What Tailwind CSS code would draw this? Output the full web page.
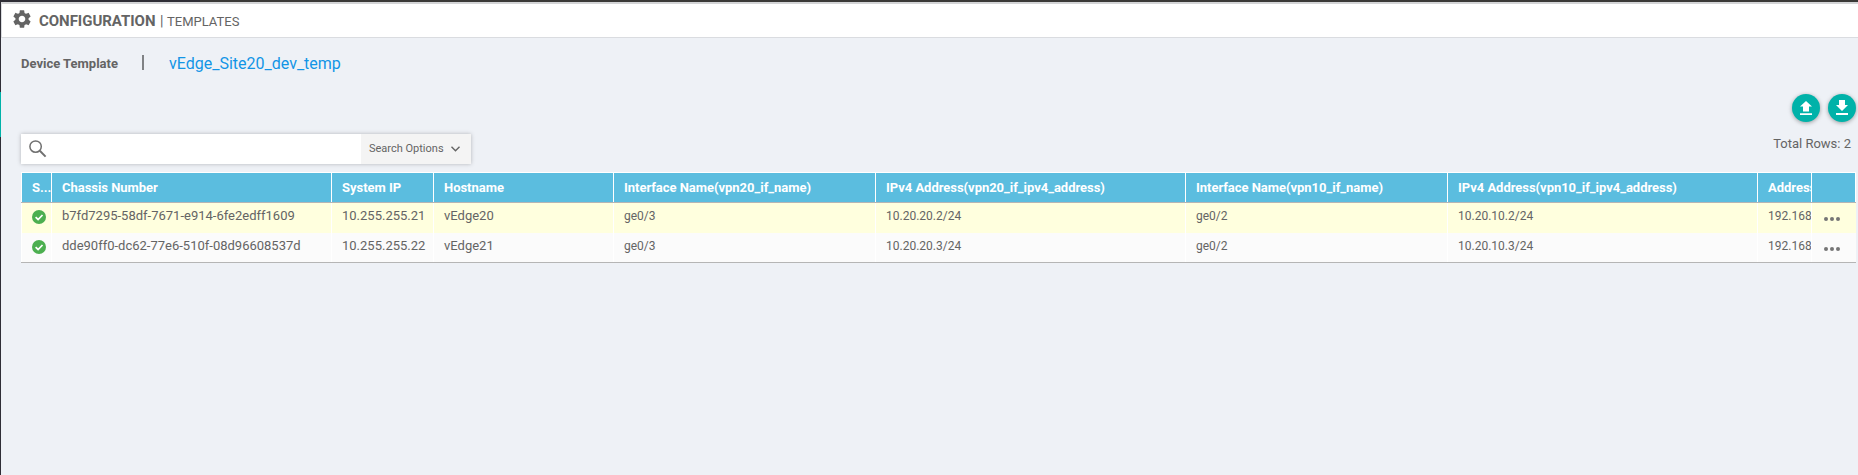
<!DOCTYPE html>
<html lang="en">
<head>
<meta charset="utf-8">
<title>Configuration | Templates</title>
<script src="https://cdn.jsdelivr.net/npm/@tailwindcss/browser@4"></script>
</head>
<body class="flex h-[475px] w-[1858px] flex-col overflow-hidden bg-[#eef1f6] font-['Roboto',sans-serif] text-[#646464]">
<svg class="hidden">
  <symbol id="ok" viewBox="0 0 14 14"><circle cx="7" cy="7" r="7" fill="#4caf50"/><path d="M3.6 7.2 6.1 9.5 10.5 5" fill="none" stroke="#fff" stroke-width="1.7"/></symbol>
  <symbol id="dots" viewBox="0 0 16 4"><g fill="#757575"><circle cx="2" cy="2" r="2"/><circle cx="8" cy="2" r="2"/><circle cx="14" cy="2" r="2"/></g></symbol>
</svg>
<div class="flex h-[2px] shrink-0"><div class="w-[200px] bg-[#2f2e36]"></div><div class="flex-1 bg-[#3a3937]"></div></div>
<div class="flex min-h-0 flex-1">
  <div class="flex w-px shrink-0 flex-col bg-[#2f2e36] pt-[90px]"><div class="h-[45px] bg-[#00b2a9]"></div></div>
  <main class="min-w-0 flex-1">
    <header class="flex h-[36px] items-center border-t-2 border-b border-l border-t-[#d3d4d6] border-b-[#dadce0] border-l-[#dadce0] bg-white pl-[9px]">
      <svg class="mt-[-3px] size-[22px]" viewBox="0 0 24 24" fill="#646464"><path d="M19.14 12.94c.04-.3.06-.61.06-.94 0-.32-.02-.64-.07-.94l2.03-1.58a.49.49 0 0 0 .12-.61l-1.92-3.32a.488.488 0 0 0-.59-.22l-2.39.96c-.5-.38-1.03-.7-1.62-.94l-.36-2.54a.484.484 0 0 0-.48-.41h-3.84c-.24 0-.43.17-.47.41l-.36 2.54c-.59.24-1.13.57-1.62.94l-2.39-.96c-.22-.08-.47 0-.59.22L2.74 8.87c-.12.21-.08.47.12.61l2.03 1.58c-.05.3-.09.63-.09.94s.02.64.07.94l-2.03 1.58a.49.49 0 0 0-.12.61l1.92 3.32c.12.22.37.29.59.22l2.39-.96c.5.38 1.03.7 1.62.94l.36 2.54c.05.24.24.41.48.41h3.84c.24 0 .44-.17.47-.41l.36-2.54c.59-.24 1.13-.56 1.62-.94l2.39.96c.22.08.47 0 .59-.22l1.92-3.32c.12-.22.07-.47-.12-.61l-2.01-1.58zM12 15.6c-1.98 0-3.6-1.62-3.6-3.6s1.62-3.6 3.6-3.6 3.6 1.62 3.6 3.6-1.62 3.6-3.6 3.6z"/></svg>
      <div class="flex items-baseline pt-[2px] pl-[6px] leading-5">
        <span class="w-[121px] text-[15px] font-bold tracking-[-0.03px] whitespace-nowrap">CONFIGURATION</span>
        <span class="w-[7px] text-[14px]">|</span>
        <span class="text-[13px] whitespace-nowrap">TEMPLATES</span>
      </div>
    </header>
    <div class="flex h-[50px] items-center pt-[2px] pl-5 leading-5">
      <span class="w-[121px] text-[13px] font-bold">Device Template</span>
      <span class="mt-[-3px] h-[15px] w-[2px] bg-[#808285]"></span>
      <span class="mt-[-1px] pl-[25px] text-[16px] text-[#1295e6]">vEdge_Site20_dev_temp</span>
    </div>
    <div class="flex h-[84px] justify-between pl-5">
      <div class="mt-[46px] flex h-[30px] w-[450px] bg-white shadow-[0_0_4px_rgba(0,0,0,0.25)]">
        <svg class="mt-[6px] ml-2 size-[18px]" viewBox="0 0 18 18" fill="none" stroke="#707070"><circle cx="6.6" cy="6.6" r="5.7" stroke-width="1.5"/><path d="m10.8 10.8 5.8 5.8" stroke-width="2"/></svg>
        <button class="ml-auto flex w-[110px] items-center bg-[#f4f4f4] pl-[8px] text-[11px]">Search Options
          <svg class="mt-[-1px] ml-[7px] h-[6px] w-[9px]" viewBox="0 0 9 6" fill="none" stroke="#646464" stroke-width="1.4"><path d="M.5.7 4.5 4.7 8.5.7"/></svg>
        </button>
      </div>
      <div class="flex flex-col items-end pt-[6px]">
        <div class="flex gap-2 pr-[2px]">
          <div class="flex size-7 items-center justify-center rounded-full bg-[#00b2a9] shadow-[0_1px_4px_rgba(0,0,0,0.35)]"><svg class="mt-[-1px] h-[14px] w-3" viewBox="0 0 12 14" fill="#fff"><path d="M6 0 12 5.5H9V10.500H3V5.500H0zM0 12.300h12v1.700H0z"/></svg></div>
          <div class="flex size-7 items-center justify-center rounded-full bg-[#00b2a9] shadow-[0_1px_4px_rgba(0,0,0,0.35)]"><svg class="mt-[-1px] h-[15px] w-3" viewBox="0 0 12 15" fill="#fff"><path d="M6 11 0 5h3V0h6v5h3zM0 13h12v2H0z"/></svg></div>
        </div>
        <div class="mt-[12px] pr-[7px] text-[13px] leading-5">Total Rows: 2</div>
      </div>
    </div>
    <section class="ml-5 w-[1835px] text-[12px] whitespace-nowrap">
      <div class="grid h-[31px] grid-cols-[30px_280px_102px_180px_262px_310px_262px_310px_54px_45px] border-t border-b border-t-white border-b-[#b5b5b5] bg-[#5bbddf] text-[13px] leading-[30px] font-bold tracking-[-0.03px] text-white *:overflow-hidden *:border-l *:border-white *:pl-[10px]">
        <div>S...</div><div>Chassis Number</div><div>System IP</div><div class="border-l-2">Hostname</div><div>Interface Name(vpn20_if_name)</div><div>IPv4 Address(vpn20_if_ipv4_address)</div><div>Interface Name(vpn10_if_name)</div><div>IPv4 Address(vpn10_if_ipv4_address)</div><div>Address</div><div class="border-r"></div>
      </div>
      <div class="grid h-[30px] grid-cols-[30px_280px_102px_180px_262px_310px_262px_310px_54px_45px] bg-[#ffffde] leading-[26px] *:overflow-hidden *:border-l *:border-white *:pl-[10px]">
        <div><svg class="mt-[7px] size-[14px]"><use href="#ok"/></svg></div><div class="text-[13px]">b7fd7295-58df-7671-e914-6fe2edff1609</div><div class="text-[13px]">10.255.255.21</div><div class="text-[13px]">vEdge20</div><div>ge0/3</div><div>10.20.20.2/24</div><div>ge0/2</div><div>10.20.10.2/24</div><div>192.168</div><div><svg class="mt-[14px] ml-[2px] h-1 w-4"><use href="#dots"/></svg></div>
      </div>
      <div class="grid h-[30px] grid-cols-[30px_280px_102px_180px_262px_310px_262px_310px_54px_45px] border-b border-[#b5b5b5] bg-[#fbfbfb] leading-[26px] *:overflow-hidden *:border-l *:border-white *:pl-[10px]">
        <div><svg class="mt-[7px] size-[14px]"><use href="#ok"/></svg></div><div class="text-[13px]">dde90ff0-dc62-77e6-510f-08d96608537d</div><div class="text-[13px]">10.255.255.22</div><div class="text-[13px]">vEdge21</div><div>ge0/3</div><div>10.20.20.3/24</div><div>ge0/2</div><div>10.20.10.3/24</div><div>192.168</div><div><svg class="mt-[14px] ml-[2px] h-1 w-4"><use href="#dots"/></svg></div>
      </div>
    </section>
  </main>
</div>
</body>
</html>
